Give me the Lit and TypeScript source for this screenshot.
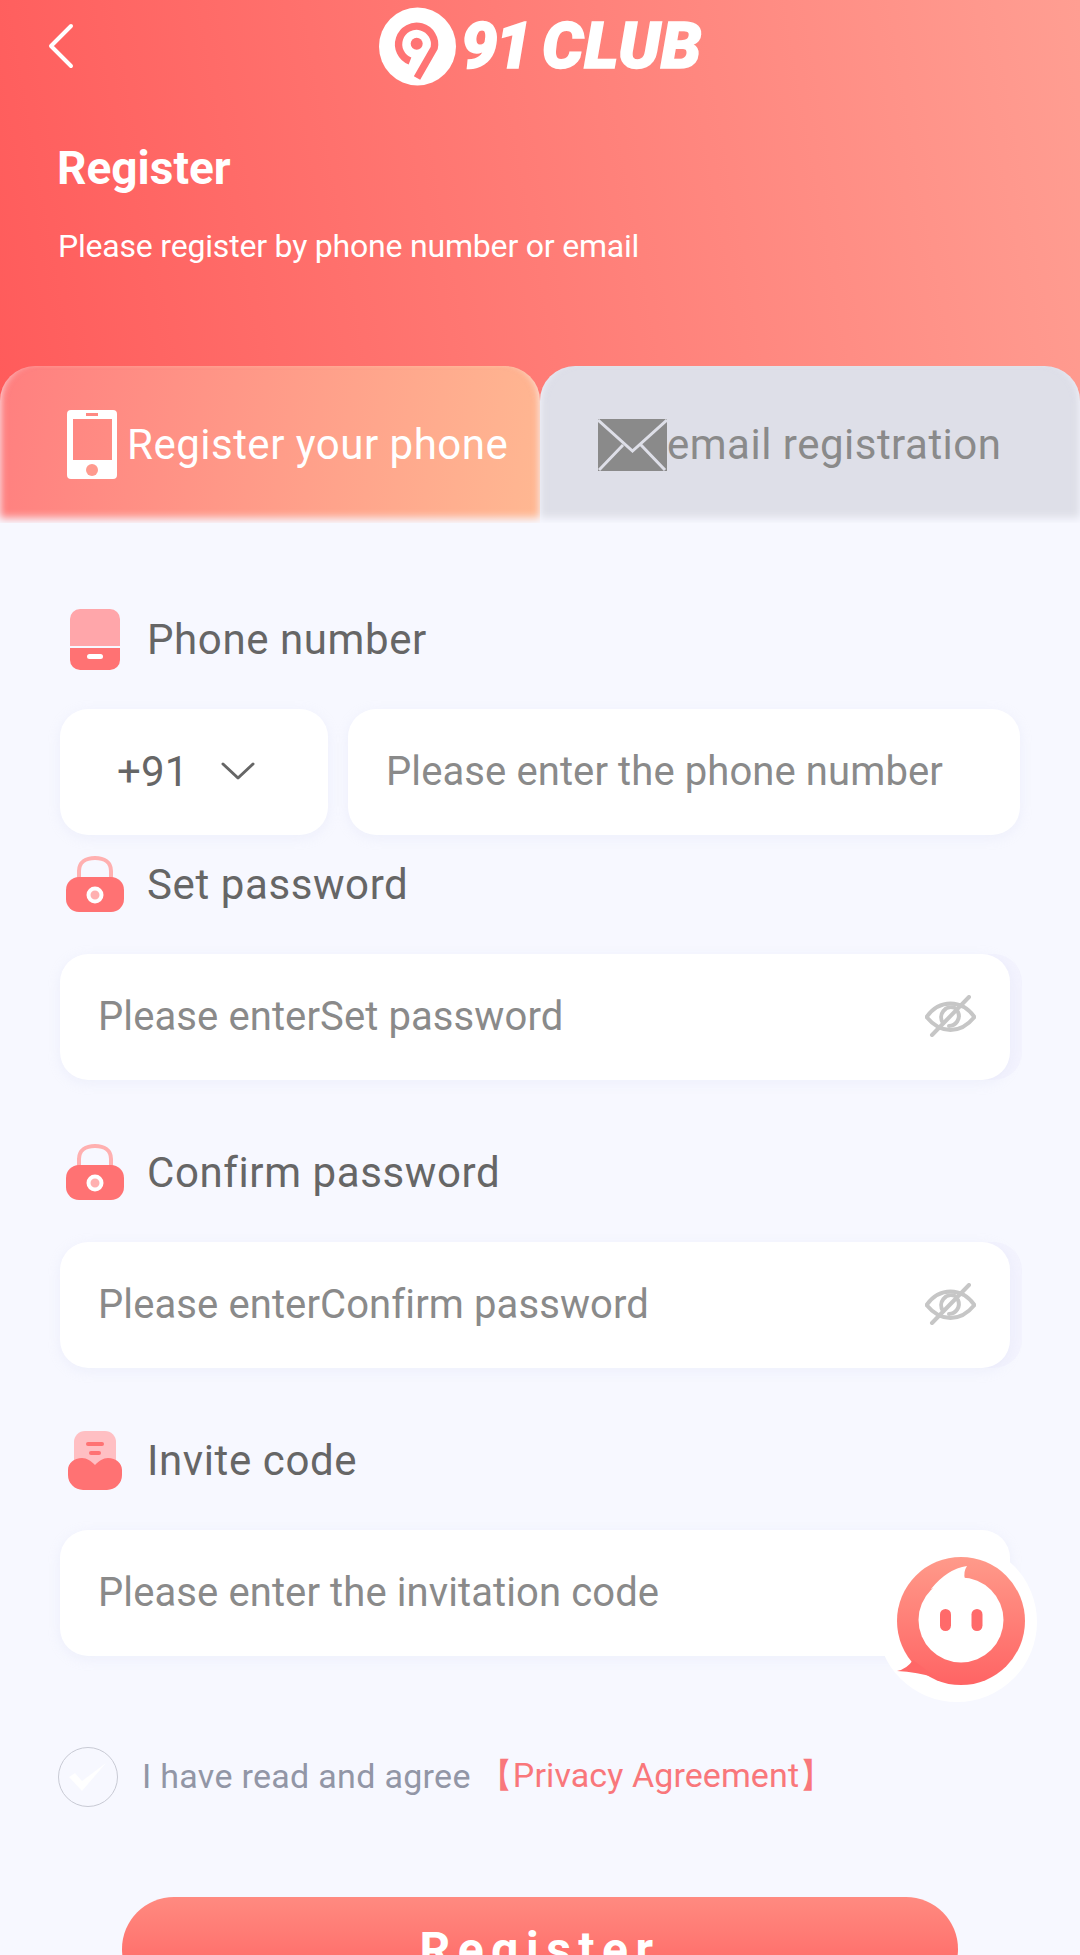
import { LitElement, html, css } from "lit";
import { customElement } from "lit/decorators.js";

const lock = html`<svg width="58" height="56" viewBox="0 0 58 56"><path d="M13 23V15C13 6 20 2 29 2s16 4 16 13v8" fill="none" stroke="#ffb0b0" stroke-width="4"/><rect x="0" y="21" width="58" height="35" rx="13" fill="#ff7273"/><circle cx="29" cy="39" r="6.500" fill="#ffb0b0" stroke="#fff" stroke-width="4"/></svg>`;
const eye = html`<svg width="51" height="42" viewBox="0 0 51 42" fill="none" stroke="#c6c6c6" stroke-width="4" stroke-linecap="round"><path d="M1.500 22C8 13 16 8.500 25.500 8.500S43 13 49.500 22C43 30 35 35 25.500 35S8 30 1.500 22Z"/><path d="M18 28a10 10 0 0 1 12-15M33 17a10 10 0 0 1-9 14"/><path d="M44 2L7 40"/></svg>`;

@customElement("app-root")
export class AppRoot extends LitElement {
  static styles = css`
    :host { display: block; width: 1080px; height: 1955px; overflow: hidden; position: relative; background: #f7f8ff; font-family: Roboto, "Liberation Sans", sans-serif; }
    .hero { height: 523px; background: linear-gradient(80deg, #ff5a5a 0%, #ff9e92 100%); display: flex; flex-direction: column; color: #fff; }
    .nav { height: 92px; position: relative; display: flex; align-items: flex-start; padding: 7px 0 0 379px; box-sizing: border-box; }
    .back { position: absolute; left: 47px; top: 23px; }
    .logo { display: flex; align-items: center; height: 79px; }
    .wordmark { font-weight: 900; font-style: italic; font-size: 65px; line-height: 79px; white-space: pre; color: #fff; -webkit-text-stroke: 1.5px #fff; }
    .w91 { margin-left: 4px; letter-spacing: -2px; }
    .wclub { margin-left: 12px; letter-spacing: 0.7px; }
    .title { font-size: 46px; font-weight: 700; margin: 51px 0 0 57px; height: 50px; line-height: 50px; }
    .sub { font-size: 32px; letter-spacing: -0.2px; line-height: 36px; margin: 35px 0 0 58px; }
    .tabs { margin-top: auto; display: grid; grid-template-columns: 540px 540px; height: 157px; }
    .tab { border-radius: 35px 35px 0 0; display: flex; align-items: center; font-size: 42px; letter-spacing: 0.5px; box-sizing: border-box; box-shadow: inset 0 -9px 8px -4px #f7f8ff, inset 6px 0 6px -4px rgba(247,248,255,.5), inset -6px 0 6px -4px rgba(247,248,255,.5); }
    .tab.on { background: linear-gradient(100deg, #ff7f7f 0%, #ffb892 100%); color: #fff; gap: 10px; padding-left: 67px; }
    .tab.off { background: #dedfe8; color: #8a8a8a; padding-left: 58px; }
    form { display: block; padding: 81px 60px 0; }
    .label { height: 70px; display: flex; align-items: center; font-size: 42px; letter-spacing: 0.6px; color: #666; margin-bottom: 35px; }
    .ico { width: 87px; flex: none; display: flex; padding-left: 6px; box-sizing: border-box; }
    .row { display: flex; gap: 20px; margin-bottom: 14px; }
    .box { background: #fff; border-radius: 28px; height: 126px; display: flex; align-items: center; box-sizing: border-box; font-size: 40px; letter-spacing: 0.1px; color: #8a8a8a; padding-bottom: 2px; box-shadow: 0 3px 12px rgba(210,215,240,.25); }
    .code { width: 268px; padding-left: 57px; gap: 33px; color: #666; font-size: 42px; flex: none; }
    .phone { flex: 1; padding-left: 38px; }
    .wrap { width: 962px; background: #f3f3fe; border-radius: 28px; margin-bottom: 57px; }
    .wrap.plain { background: none; }
    .wrap .box { width: 950px; padding: 0 34px 2px 38px; justify-content: space-between; }
    .agree { display: flex; align-items: center; margin: 91px 0 0 -2px; font-size: 34px; letter-spacing: 0.1px; color: #9296a6; height: 60px; padding-bottom: 2px; box-sizing: border-box; }
    .tick { width: 60px; height: 60px; flex: none; margin: 0 24px -2px 0; }
    .read { letter-spacing: 0.3px; }
    .link { color: #f9777b; margin-left: 8px; }
    .btn { margin: 90px 0 0 62px; width: 836px; height: 104px; border-radius: 52px; background: linear-gradient(180deg, #ff8a80 0%, #ff5f5f 100%); color: #fff; font-size: 48px; font-weight: 700; letter-spacing: 7.500px; display: flex; align-items: center; justify-content: center; }
    .chat { position: absolute; left: 877px; top: 1542px; }
  `;

  render() {
    return html`
      <div class="hero">
        <div class="nav">
          <svg class="back" width="28" height="46" viewBox="0 0 28 46" fill="none" stroke="#fff" stroke-width="4" stroke-linecap="round" stroke-linejoin="round"><path d="M24 3L4 23l20 20"/></svg>
          <div class="logo">
            <svg width="78" height="79" viewBox="0 0 78 79">
              <ellipse cx="38.500" cy="39.500" rx="38.500" ry="39" fill="#fff"/>
              <path d="M31 54A18 18 0 1 1 55.200 41L38 71" fill="none" stroke="#ff7474" stroke-width="7.300"/>
              <circle cx="37.700" cy="36.700" r="6" fill="#ff7474"/>
            </svg>
            <span class="wordmark w91">91</span><span class="wordmark wclub">CLUB</span>
          </div>
        </div>
        <div class="title">Register</div>
        <div class="sub">Please register by phone number or email</div>
        <div class="tabs">
          <div class="tab on">
            <svg width="50" height="69" viewBox="0 0 50 69"><path fill="#fff" fill-rule="evenodd" d="M4 0h42a4 4 0 0 1 4 4v61a4 4 0 0 1-4 4H4a4 4 0 0 1-4-4V4a4 4 0 0 1 4-4ZM6 9v41h39V9ZM19 3v3h12V3Z"/><circle cx="25" cy="60" r="6" fill="#ff9a8e"/></svg>
            <span>Register your phone</span>
          </div>
          <div class="tab off">
            <svg width="69" height="52" viewBox="0 0 69 52"><rect width="69" height="52" fill="#8a8a8a"/><path d="M0 1l34.500 31L69 1M1 51l24-25M67 51L43 26" fill="none" stroke="#dedfe8" stroke-width="3"/></svg>
            <span>email registration</span>
          </div>
        </div>
      </div>
      <form>
        <div class="label"><span class="ico"><svg width="50" height="61" viewBox="0 0 50 61" style="margin-left:4px"><path d="M10 0h30a10 10 0 0 1 10 10v27H0V10A10 10 0 0 1 10 0Z" fill="#ffa6aa"/><path d="M0 39h50v12a10 10 0 0 1-10 10H10A10 10 0 0 1 0 51Z" fill="#ff7273"/><rect x="17" y="45" width="16" height="5" rx="2.500" fill="#fff"/></svg></span>Phone number</div>
        <div class="row">
          <div class="box code">+91<svg width="34" height="20" viewBox="0 0 34 20" fill="none" stroke="#666" stroke-width="3" stroke-linecap="round" stroke-linejoin="round"><path d="M2 3l15 14L32 3"/></svg></div>
          <div class="box phone">Please enter the phone number</div>
        </div>
        <div class="label"><span class="ico">${lock}</span>Set password</div>
        <div class="wrap"><div class="box">Please enterSet password ${eye}</div></div>
        <div class="label"><span class="ico">${lock}</span>Confirm password</div>
        <div class="wrap"><div class="box">Please enterConfirm password ${eye}</div></div>
        <div class="label"><span class="ico"><svg width="54" height="59" viewBox="0 0 54 59" style="margin-left:2px"><rect x="6" y="0" width="42" height="44" rx="11" fill="#ffbfc3"/><rect x="18" y="11" width="18" height="4" rx="2" fill="#ff7273"/><rect x="21" y="20" width="12" height="4" rx="2" fill="#ff7273"/><path d="M14 27c5 0 9 3 13 7 4-4 8-7 13-7 8 0 14 5 14 12v5a15 15 0 0 1-15 15H15A15 15 0 0 1 0 44v-5c0-7 6-12 14-12Z" fill="#ff7273"/></svg></span>Invite code</div>
        <div class="wrap plain"><div class="box">Please enter the invitation code</div></div>
        <div class="agree">
          <svg class="tick" viewBox="0 0 60 60"><circle cx="30" cy="30" r="29.500" fill="none" stroke="#c8cad4" stroke-width="1"/><path d="M11 30L17 26L24 34L48 16L24 44Z" fill="#fff"/></svg>
          <span class="read">I have read and agree</span>
          <span class="link">【Privacy Agreement】</span>
        </div>
        <div class="btn">Register</div>
      </form>
      <svg class="chat" width="160" height="160" viewBox="0 0 160 160">
        <defs><linearGradient id="g" x1="0" y1="0" x2="0" y2="1"><stop offset="0" stop-color="#ff9a8a"/><stop offset="1" stop-color="#ff6464"/></linearGradient></defs>
        <circle cx="80" cy="80" r="80" fill="#fff"/>
        <circle cx="84" cy="79" r="64" fill="url(#g)"/>
        <path d="M20 129Q30 127 36 118L60 136Q40 130 20 129Z" fill="#ff6767"/>
        <circle cx="84" cy="78" r="42.500" fill="#fff"/>
        <path d="M90 24Q70 27 54 47L88 37Q86 30 90 24Z" fill="#fff"/>
        <rect x="63" y="67" width="11" height="22" rx="5.500" fill="#ff6a6a"/><rect x="94.500" y="67" width="11" height="22" rx="5.500" fill="#ff6a6a"/>
      </svg>
    `;
  }
}
